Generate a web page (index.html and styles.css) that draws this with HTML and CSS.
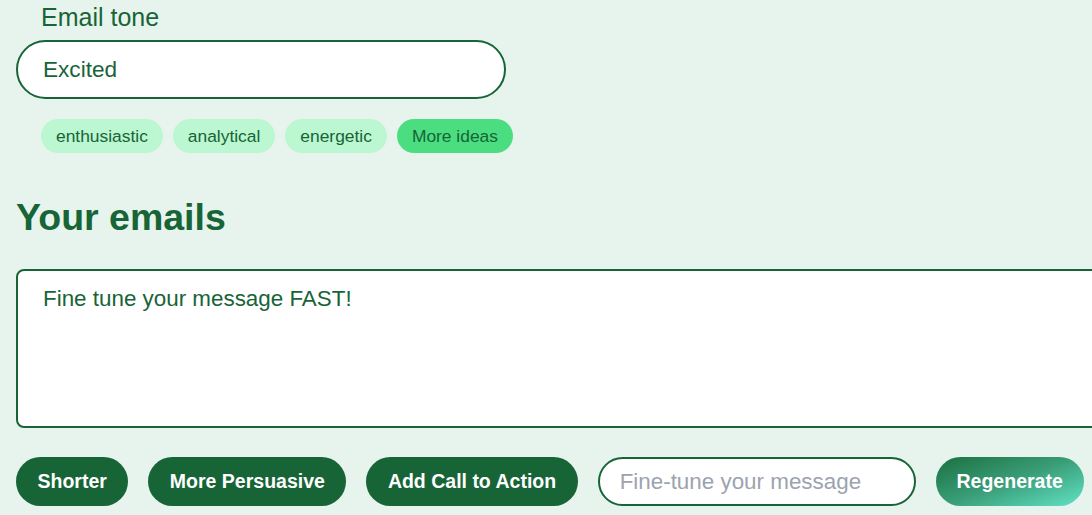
FILE: index.html
```html
<!DOCTYPE html>
<html lang="en">
<head>
<meta charset="utf-8">
<title>Email tone</title>
<link rel="stylesheet" href="styles.css">
</head>
<body>
  <main class="page">
    <section class="tone">
      <label class="tone-label" for="tone">Email tone</label>
      <input id="tone" class="tone-input" type="text" value="Excited">
      <div class="chips">
        <button class="chip">enthusiastic</button>
        <button class="chip">analytical</button>
        <button class="chip">energetic</button>
        <button class="chip chip-more">More ideas</button>
      </div>
    </section>
    <section class="emails">
      <h2 class="emails-title">Your emails</h2>
      <textarea class="email-box">Fine tune your message FAST!</textarea>
      <div class="actions">
        <button class="action">Shorter</button>
        <button class="action">More Persuasive</button>
        <button class="action">Add Call to Action</button>
        <input class="finetune" type="text" placeholder="Fine-tune your message">
        <button class="action regen">Regenerate</button>
      </div>
    </section>
  </main>
</body>
</html>
```

FILE: styles.css
```css
html, body {
  margin: 0;
  padding: 0;
  overflow: hidden;
  background: #e6f4ed;
}
body {
  font-family: "Liberation Sans", Arial, sans-serif;
  color: #176437;
  width: 1092px;
  height: 515px;
}
.page {
  padding: 0 16px;
}
.tone {
  display: flex;
  flex-direction: column;
  align-items: flex-start;
}
.tone-label {
  display: block;
  margin-left: 25px;
  padding-top: 2px;
  font-size: 25px;
  line-height: 30px;
  height: 38px;
}
.tone-input {
  box-sizing: border-box;
  width: 490px;
  height: 59px;
  border: 2px solid #176437;
  border-radius: 999px;
  background: #fff;
  padding: 0 25px;
  font-family: inherit;
  font-size: 22.6px;
  color: #176437;
  outline: none;
}
.chips {
  display: flex;
  gap: 10px;
  margin: 20px 0 0 25px;
}
.chip {
  flex-shrink: 0;
  height: 34px;
  padding: 0 15px;
  border: none;
  border-radius: 999px;
  background: #bbf7d0;
  color: #176437;
  font-family: inherit;
  font-size: 17.4px;
}
.chip-more {
  background: #4ade80;
}
.emails-title {
  margin: 42px 0 0;
  font-size: 37.5px;
  line-height: 44px;
  font-weight: bold;
}
.email-box {
  display: block;
  box-sizing: border-box;
  width: 1120px;
  height: 159px;
  margin-top: 30px;
  border: 2px solid #176437;
  border-radius: 8px;
  background: #fff;
  padding: 11px 25px;
  font-family: inherit;
  font-size: 22.4px;
  line-height: 1.5;
  color: #176437;
  resize: none;
  outline: none;
}
.actions {
  display: flex;
  gap: 20px;
  margin-top: 29px;
  align-items: center;
}
.action {
  flex-shrink: 0;
  height: 49px;
  padding: 0 21.5px;
  border: none;
  border-radius: 999px;
  background: #176437;
  color: #fff;
  font-family: inherit;
  font-size: 19.5px;
  font-weight: bold;
  white-space: nowrap;
}
.finetune {
  flex-shrink: 0;
  box-sizing: border-box;
  width: 318px;
  height: 49px;
  border: 2px solid #176437;
  border-radius: 999px;
  background: #fff;
  padding: 0 20px;
  font-family: inherit;
  font-size: 22.4px;
  color: #176437;
  outline: none;
}
.finetune::placeholder {
  color: #9ca3af;
}
.regen {
  width: 148px;
  padding: 0;
  background: linear-gradient(160deg, #1b7040 0%, #3a9e78 50%, #62e3c6 100%);
}
```
